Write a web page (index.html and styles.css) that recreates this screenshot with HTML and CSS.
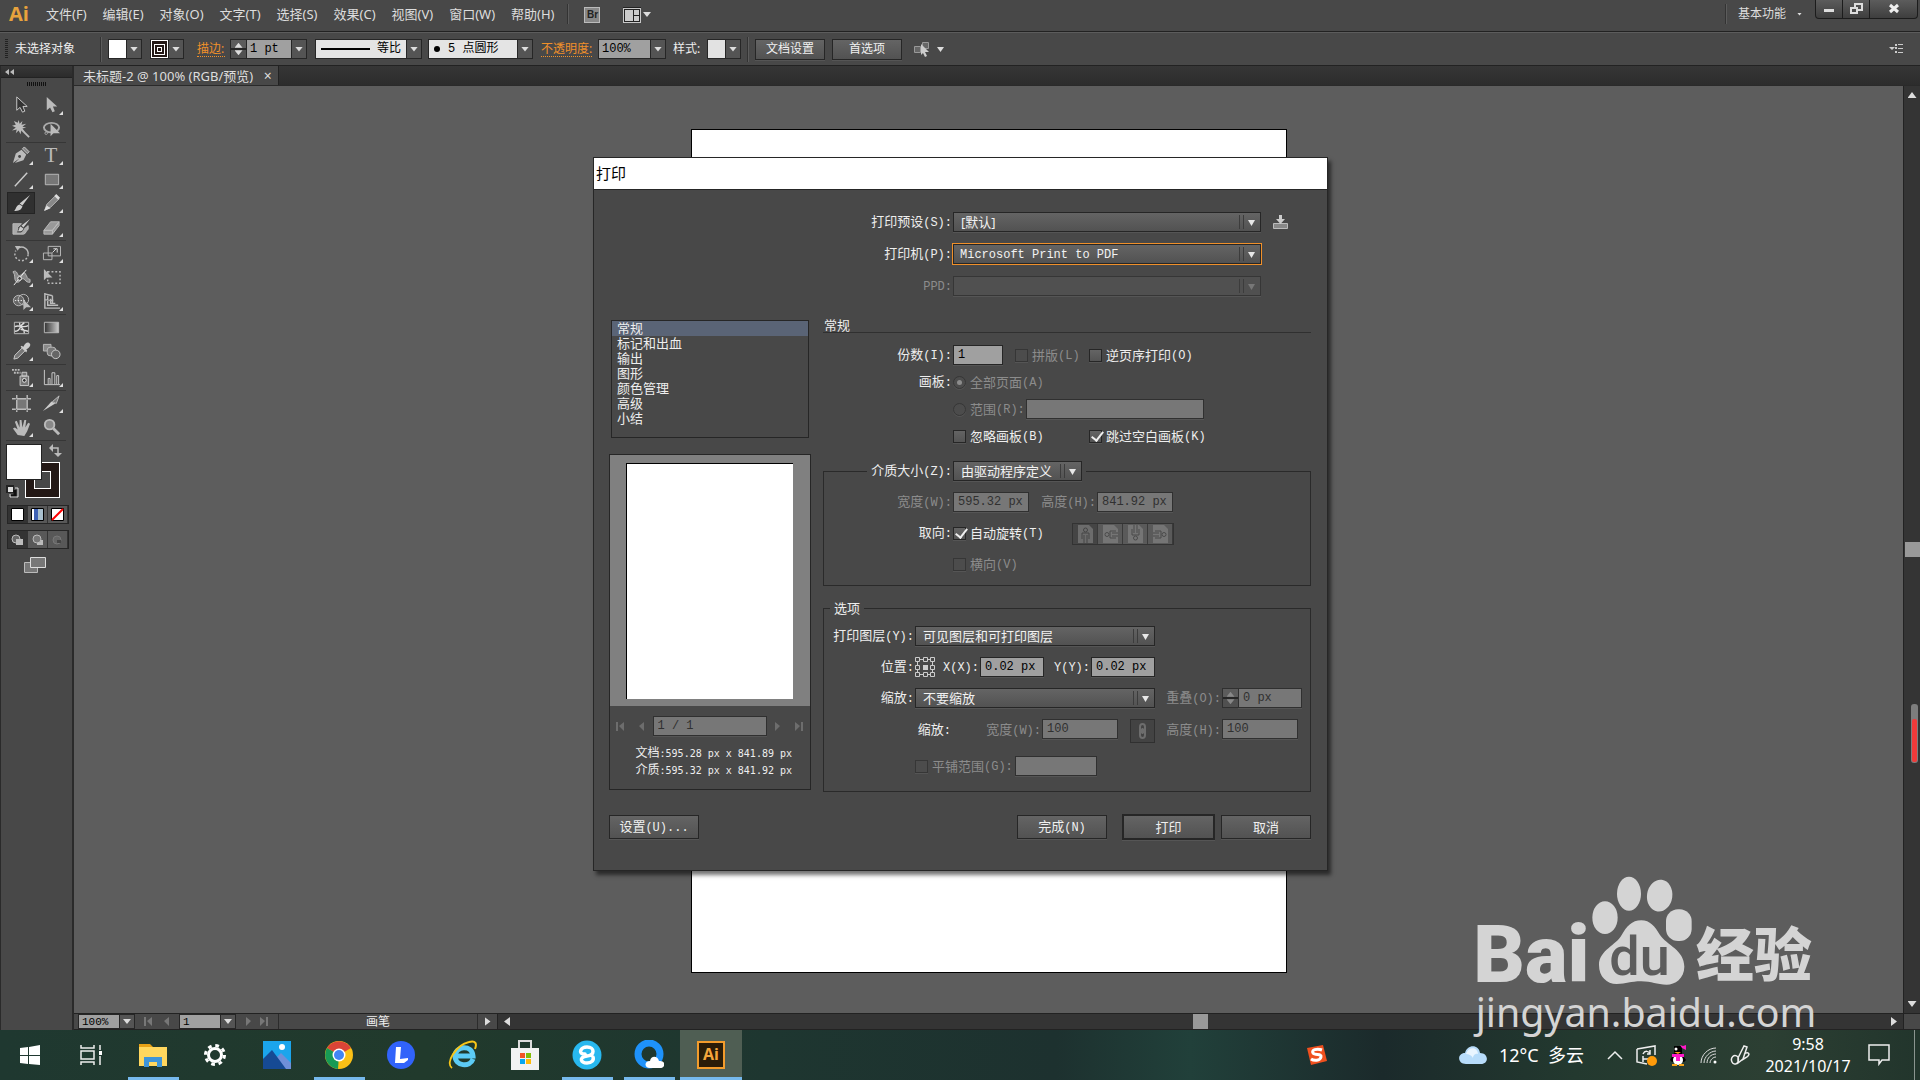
FILE: index.html
```html
<!DOCTYPE html>
<html lang="zh-CN">
<head>
<meta charset="utf-8">
<title>未标题-2 - 打印</title>
<link rel="stylesheet" href="styles.css">
</head>
<body>
<header class="menubar">
  <span class="app-logo">Ai</span>
  <nav class="menus">
    <button>文件(F)</button><button>编辑(E)</button><button>对象(O)</button><button>文字(T)</button><button>选择(S)</button><button>效果(C)</button><button>视图(V)</button><button>窗口(W)</button><button>帮助(H)</button>
  </nav>
  <span class="divider menu-divider"></span>
  <button class="bridge" aria-label="Bridge">Br</button>
  <button class="arrange" aria-label="排列文档">
    <svg width="28" height="16" viewBox="0 0 28 16"><path fill="#222" d="M0 0h18v16H0z"/><path fill="#c8c8c8" d="M0 1h18v15H0z"/><path fill="#222" d="M1 2h16v13H1z"/><path fill="#ccc" d="M2 3h8v11H2zM11 3h5v5h-5zM11 9h5v5h-5z"/><path fill="#ddd" d="M20 5h8l-4 5z"/></svg>
  </button>
  <span class="grow"></span>
  <span class="divider"></span>
  <button class="workspace-name">基本功能 <i class="tri tiny"></i></button>
  <div class="window-buttons">
    <button aria-label="最小化"><svg width="12" height="12"><path fill="#ddd" d="M1 6h10v3H1z"/></svg></button>
    <button aria-label="还原"><svg width="13" height="12"><path fill="none" stroke="#ddd" stroke-width="2" d="M5 5V1h7v6H8M1 5h6v5H1z"/></svg></button>
    <button class="close" aria-label="关闭"><svg width="12" height="12"><path stroke="#eee" stroke-width="3" d="M2 2l8 7M10 2L2 9"/></svg></button>
  </div>
</header>

<section class="controlbar">
  <span class="grip"></span>
  <span class="selection-state">未选择对象</span>
  <span class="divider"></span>
  <button class="combo fill" aria-label="填色"><span class="swatch white"></span><span class="drop"><i class="tri"></i></span></button>
  <button class="combo stroke" aria-label="描边颜色"><span class="swatch ring"></span><span class="drop"><i class="tri"></i></span></button>
  <a class="hot stroke-link" href="#">描边:</a>
  <div class="combo weight"><span class="stepper"><i class="tri up"></i><i class="tri"></i></span><input class="mono" aria-label="描边粗细" value="1 pt"><span class="drop"><i class="tri"></i></span></div>
  <button class="combo profile"><span class="face"><span class="rule"></span>等比</span><span class="drop"><i class="tri"></i></span></button>
  <button class="combo brush"><span class="face"><span class="dot"></span>5 点圆形</span><span class="drop"><i class="tri"></i></span></button>
  <a class="hot opacity-link" href="#">不透明度:</a>
  <div class="combo opacity"><input class="mono" aria-label="不透明度" value="100%"><span class="drop"><i class="tri"></i></span></div>
  <span class="style-label">样式:</span>
  <button class="combo style" aria-label="样式"><span class="swatch pale"></span><span class="drop"><i class="tri"></i></span></button>
  <span class="divider style-divider"></span>
  <button class="btn bar-btn">文档设置</button>
  <button class="btn bar-btn">首选项</button>
  <button class="similar" aria-label="选择类似的对象">
    <svg width="32" height="16" viewBox="0 0 32 16"><path fill="#666" stroke="#999" d="M1.500 5.500h6v6h-6zM9.500 1.500h6v6h-6z"/><path fill="#ccc" d="M8 3l8 8h-4l2 4-2 1-2-4-2 2z"/><path fill="#ddd" d="M24 6h7l-3.500 5z"/></svg>
  </button>
  <span class="grow"></span>
  <button class="panel-menu" aria-label="面板菜单"><svg width="14" height="10"><path fill="#ccc" d="M0 3h6L3 6zM6 0h2v2H6zM9 0h5v1H9zM6 3h2v2H6zM9 4h5v1H9zM6 7h2v2H6zM9 8h5v1H9z"/></svg></button>
</section>

<main class="workspace">
  <aside class="toolbox">
    <div class="toolbox-head"><svg width="9" height="6"><path fill="#bbb" d="M4 0v6L0 3zM9 0v6L5 3z"/></svg></div>
    <div class="toolbox-grip"></div>
    <div class="tools">
      <div class="group">
        <button aria-label="选择工具"><svg viewBox="0 0 20 20"><path fill="#333" stroke="#ccc" d="M5 1v14l3.500-3 2.500 5 2.500-1-2-5H16z"/></svg></button>
        <button class="more" aria-label="直接选择工具"><svg viewBox="0 0 20 20"><path fill="#bbb" d="M5 1v14l3.500-3 2.500 5 2.500-1-2-5H16z"/></svg></button>
        <button aria-label="魔棒工具"><svg viewBox="0 0 20 20"><path stroke="#bbb" stroke-width="2" d="M9 9l9 9"/><path fill="#bbb" d="M7 0l1 4 3-3-1 4 5-1-4 3 4 1-4 1 3 4-4-3-1 5-2-4-3 3 1-4-5 1 4-3-4-2 4-1-2-4 4 2z"/></svg></button>
        <button aria-label="套索工具"><svg viewBox="0 0 20 20"><ellipse cx="10" cy="8" rx="8" ry="5" fill="none" stroke="#aaa" stroke-width="2"/><path fill="none" stroke="#aaa" d="M5 12c-3 1-2 4 0 3s1-3-1-2"/><path fill="#bbb" d="M9 4v13l3-3h7z"/></svg></button>
      </div>
      <div class="group">
        <button class="more" aria-label="钢笔工具"><svg viewBox="0 0 20 20"><path fill="#bbb" d="M1 18L4 8l6-4 5 5-3 6-9 3 5-5z"/><circle cx="8" cy="11" r="1.500" fill="#444"/><path fill="#888" stroke="#ccc" d="M11 3l2-2 5 5-2 2z"/></svg></button>
        <button class="more type" aria-label="文字工具">T</button>
        <button class="more" aria-label="直线段工具"><svg viewBox="0 0 20 20"><path stroke="#ccc" stroke-width="1.500" d="M3 17L16 3"/></svg></button>
        <button class="more" aria-label="矩形工具"><svg viewBox="0 0 20 20"><path fill="#777" stroke="#bbb" d="M3.500 4.500h14v11h-14z"/></svg></button>
        <button class="active" aria-label="画笔工具"><svg viewBox="0 0 20 20"><path fill="#ccc" d="M19 1l-8 11-3-2zM8 11l3 2c-1 4-4 5-9 5 2-1 2-6 6-7z"/></svg></button>
        <button class="more" aria-label="铅笔工具"><svg viewBox="0 0 20 20"><path fill="#888" stroke="#bbb" d="M3 17l2-6 9-9 4 3-9 9z"/><path fill="#ddd" d="M2 18l3-6 4 3zM13 2l4 4 2-2-4-4z"/></svg></button>
        <button aria-label="斑点画笔工具"><svg viewBox="0 0 20 20"><path fill="#aaa" stroke="#bbb" d="M1 6h9l-4 4c1 5 8 1 11-2v4c-2 0-2 5-5 5H1z"/><path fill="#444" d="M20 2l-8 10-4-2 8-8zM8 9l5 2c-2 4-4 5-8 4 2-1 1-5 3-6z"/><path fill="#ccc" d="M19 1l-7 9-2-2zM9 9l3 2c-1 3-3 3-6 3 2-1 1-4 3-5z"/></svg></button>
        <button class="more" aria-label="橡皮擦工具"><svg viewBox="0 0 20 20"><path fill="#999" stroke="#bbb" d="M2 13l7-9h9l-7 9zM2 13h9v4H2zM11 13l7-9v4l-7 9z"/></svg></button>
      </div>
      <div class="group">
        <button class="more" aria-label="旋转工具"><svg viewBox="0 0 20 20"><path fill="none" stroke="#bbb" stroke-width="1.500" d="M7 4a7 7 0 0 1 10 7"/><path fill="none" stroke="#bbb" stroke-width="1.500" stroke-dasharray="2" d="M17 11a7 7 0 1 1-13-4"/><path fill="#bbb" d="M3 2l6 0-3 5z"/></svg></button>
        <button class="more" aria-label="比例缩放工具"><svg viewBox="0 0 20 20"><path fill="none" stroke="#bbb" d="M6.500 2.500h13v10h-13zM1.500 9.500h9v7h-9z"/><path stroke="#ddd" fill="none" d="M11 9l4-4M12 5h4v4"/></svg></button>
        <button class="more" aria-label="宽度工具"><svg viewBox="0 0 20 20"><path fill="#888" stroke="#bbb" d="M1 4c5-3 4 5 7 4s4-5 6-2 2 6 5 6v3c-5 1-6-6-9-3s-4 4-6 2 0-7-3-10z"/><path stroke="#eee" d="M2 18L15 2"/><circle cx="8" cy="11" r="2" fill="#444" stroke="#eee"/></svg></button>
        <button aria-label="自由变换工具"><svg viewBox="0 0 20 20"><path fill="none" stroke="#bbb" stroke-width="1.500" stroke-dasharray="2" d="M6 4h13v12H6z"/><path fill="#bbb" d="M2 1v12l3-3h6z"/></svg></button>
        <button class="more" aria-label="形状生成器工具"><svg viewBox="0 0 20 20"><circle cx="7" cy="9" r="5.500" fill="#666" stroke="#bbb"/><circle cx="12" cy="8" r="5.500" fill="none" stroke="#bbb"/><path stroke="#eee" stroke-dasharray="1.500" d="M3 9h12"/><path fill="#bbb" d="M12 8v11l3-3h5z"/></svg></button>
        <button class="more" aria-label="透视网格工具"><svg viewBox="0 0 20 20"><path fill="none" stroke="#bbb" stroke-width="1.500" d="M3 1v16h16M6 4v10h11M9 7v5h5M3 2l8 2M11 4v8M3 17V2M3 8l9 1"/></svg></button>
      </div>
      <div class="group">
        <button aria-label="网格工具"><svg viewBox="0 0 20 20"><path fill="#444" stroke="#bbb" d="M2.500 4.500h15v12h-15z"/><path fill="none" stroke="#ddd" stroke-width="1.500" d="M3 14c7 0 4-6 10-9M8 5c-1 5 5 5 5 11M3 9c5-2 9 2 14-1M9 12l8 2"/></svg></button>
        <button aria-label="渐变工具"><svg viewBox="0 0 20 20"><defs><linearGradient id="toolGradient"><stop stop-color="#333"/><stop offset="1" stop-color="#ccc"/></linearGradient></defs><path fill="url(#toolGradient)" stroke="#bbb" d="M2.500 4.500h15v11h-15z"/></svg></button>
        <button class="more" aria-label="吸管工具"><svg viewBox="0 0 20 20"><path fill="#777" stroke="#ccc" d="M2 18l1-4 8-8 3 3-8 8z"/><path fill="#ccc" d="M9 5l6 6 1-2-1-1c5-3 5-6 3-7s-4 0-6 4l-2-1z"/></svg></button>
        <button aria-label="混合工具"><svg viewBox="0 0 20 20"><path fill="#888" stroke="#bbb" d="M1.500 2.500h8v7h-8z"/><rect x="5.500" y="5.500" width="9" height="9" rx="3" fill="#777" stroke="#bbb"/><circle cx="14.500" cy="13" r="4.500" fill="#666" stroke="#ccc"/></svg></button>
      </div>
      <div class="group">
        <button class="more" aria-label="符号喷枪工具"><svg viewBox="0 0 20 20"><path fill="#777" stroke="#ccc" d="M8.500 8.500h9v10h-9zM10.500 4.500h5v4h-5z"/><circle cx="13" cy="13" r="2" fill="#333" stroke="#eee"/><path stroke="#bbb" stroke-width="2" stroke-dasharray="2 1" d="M0 2h9M2 5h7"/></svg></button>
        <button class="more" aria-label="柱形图工具"><svg viewBox="0 0 20 20"><path fill="none" stroke="#ccc" d="M2.500 2v15.500H19M6.500 17v-6h2v6M10.500 17V5h3v12M15.500 17V8h2v9"/></svg></button>
      </div>
      <div class="group">
        <button aria-label="画板工具"><svg viewBox="0 0 20 20"><path fill="#777" d="M5 5h11v11H5z"/><path stroke="#bbb" stroke-width="1.500" d="M5 1v18M16 1v18M0 5h20M0 16h20" stroke-dasharray="4 1 10 1"/></svg></button>
        <button class="more" aria-label="切片工具"><svg viewBox="0 0 20 20"><path fill="#ccc" d="M1 18l9-10 4 2z"/><path fill="#777" stroke="#bbb" d="M11 8l7-6-3 8z"/></svg></button>
        <button class="more" aria-label="抓手工具"><svg viewBox="0 0 20 20"><path fill="#bbb" d="M6 18L1 11l2-1 3 2L3 4l2-1 3 7V2h2l1 8 2-8h2l-1 8 3-5 2 1-3 8-3 5z"/></svg></button>
        <button aria-label="缩放工具"><svg viewBox="0 0 20 20"><circle cx="8" cy="7" r="5" fill="#888" stroke="#bbb" stroke-width="2"/><path stroke="#bbb" stroke-width="3" d="M12 11l6 6"/></svg></button>
      </div>
    </div>
    <svg class="fill-stroke" width="62" height="58" viewBox="0 0 62 58">
      <path fill="#fff" d="M19 18h35v36H19z"/><path fill="#231815" d="M20 19h33v34H20z"/><path fill="#fff" d="M28 27h17v18H28z"/><path fill="#484848" d="M29 28h15v16H29z"/>
      <path fill="#222" d="M0 0h36v36H0z"/><path fill="#fff" d="M1 1h34v34H1z"/>
      <path fill="none" stroke="#bbb" stroke-width="1.500" d="M46 4h6v6"/><path fill="#bbb" d="M47 0v8l-4-4zM48 9h8l-4 4z"/>
      <path fill="#222" d="M0 41h8v8H0z"/><path fill="#ddd" d="M2 43h5v5H2z"/><path fill="none" stroke="#111" stroke-width="3" d="M9 46v6H5"/><path fill="none" stroke="#ddd" d="M9 44h3v9H4v-3"/>
    </svg>
    <div class="modes color-modes">
      <button class="active" aria-label="颜色"><svg width="13" height="13"><path fill="#fff" stroke="#000" d="M.5.500h12v12H.5z"/></svg></button>
      <button aria-label="渐变"><svg width="13" height="13"><path fill="#fff" stroke="#000" d="M.5.500h12v12H.5z"/><path fill="#3f62b5" d="M3 1h4v11H3z"/><path fill="#a9c0ce" d="M7 1h5v11H7z"/></svg></button>
      <button aria-label="无"><svg width="13" height="13"><path fill="#fff" stroke="#000" d="M.5.500h12v12H.5z"/><path stroke="red" stroke-width="2" d="M1 12L12 1"/></svg></button>
    </div>
    <div class="modes">
      <button class="active" aria-label="正常绘图"><svg width="13" height="12"><circle cx="5" cy="5" r="4" fill="#666" stroke="#bbb"/><path fill="#bbb" d="M5 5h7v6H5z"/></svg></button>
      <button aria-label="背面绘图"><svg width="13" height="12"><path fill="#bbb" d="M6 6h6v5H6z"/><circle cx="6" cy="5" r="4" fill="#777" stroke="#bbb"/></svg></button>
      <button aria-label="内部绘图"><svg width="13" height="12"><circle cx="6" cy="6" r="4" fill="#666" stroke="#777"/><path fill="#444" d="M6 6h4v3H6z"/></svg></button>
    </div>
    <button class="screen-mode" aria-label="更改屏幕模式"><svg width="22" height="17"><path fill="#777" stroke="#bbb" d="M.5 5.500h13v10H.5z"/><path fill="#777" stroke="#ddd" d="M6.500.500h15v10h-15z"/></svg></button>
  </aside>

  <section class="document">
    <div class="tabs"><div class="tab">未标题-2 @ 100% (RGB/预览)<button class="tab-close" aria-label="关闭标签">×</button></div></div>
    <div class="viewport">
      <div class="canvas"><div class="artboard"></div></div>
      <div class="vscroll"><i class="arrow up"></i><i class="thumb"></i><i class="arrow"></i></div>
    </div>
    <footer class="status">
      <div class="combo zoom"><input class="mono" aria-label="缩放比例" value="100%"><span class="drop"><i class="tri"></i></span></div>
      <svg class="nav-icons" width="26" height="9"><path fill="#777" d="M0 0h2v9H0zM8 0v9L3 4zM25 0v9l-5-5z"/></svg>
      <div class="combo page"><input class="mono" aria-label="画板" value="1"><span class="drop"><i class="tri"></i></span></div>
      <svg class="nav-icons" width="24" height="9"><path fill="#777" d="M1 0v9l5-5zM15 0v9l5-5zM21 0h2v9h-2z"/></svg>
      <div class="current-tool">画笔</div>
      <button class="status-more" aria-label="状态菜单"><i class="side to-right"></i></button>
      <div class="hscroll"><i class="side"></i><i class="thumb"></i><i class="side to-right"></i></div>
      <span class="corner"></span>
    </footer>
  </section>
</main>

<footer class="taskbar">
  <button aria-label="开始"><svg width="22" height="22" viewBox="0 0 22 22"><path fill="#fff" d="M1 4l8-1v8H1zM10 3l11-2v10H10zM1 12h8v8l-8-1zM10 12h11v9l-11-1z"/></svg></button>
  <button aria-label="任务视图"><svg width="22" height="22" viewBox="0 0 22 22"><path fill="none" stroke="#eee" stroke-width="1.500" d="M1 1v3h13V1M1 7h13v8H1zM1 21v-3h13v3M20 1v5M20 12v9"/><path fill="#fff" d="M19 7h3v4h-3z"/></svg></button>
  <button class="open" aria-label="文件资源管理器"><svg width="28" height="26" viewBox="0 0 28 26"><path fill="#e6a117" d="M0 2h11l3 3v4H0z"/><path fill="#ffd75e" d="M0 5h28v19H0z"/><path fill="#3f95d8" d="M5 15h18v10h-5v-5h-8v5H5z"/></svg></button>
  <button aria-label="设置"><svg width="24" height="24" viewBox="0 0 24 24"><circle cx="12" cy="12" r="6.500" fill="none" stroke="#fff" stroke-width="3"/><circle cx="12" cy="12" r="9.500" fill="none" stroke="#fff" stroke-width="3" stroke-dasharray="3.730 3.730"/></svg></button>
  <button aria-label="照片"><svg width="28" height="28" viewBox="0 0 28 28"><path fill="#1ba5ec" d="M0 0h28v28H0z"/><path fill="#6f8fd8" d="M13 17l5-5 10 10v6H13z"/><path fill="#164a94" d="M0 18l9-9 14 19H0z"/><circle cx="19" cy="6" r="3" fill="#fff"/></svg></button>
  <button class="open" aria-label="Chrome"><svg width="28" height="28" viewBox="0 0 28 28"><circle cx="14" cy="14" r="14" fill="#fbc116"/><path fill="#db4437" d="M14 14L2 7a14 14 0 0 1 24 0z"/><path fill="#189a55" d="M14 14l-1 14A14 14 0 0 1 2 7z"/><circle cx="14" cy="14" r="6.500" fill="#fff"/><circle cx="14" cy="14" r="5" fill="#4285f4"/></svg></button>
  <button aria-label="L"><svg width="29" height="29" viewBox="0 0 29 29"><circle cx="14" cy="14" r="14" fill="#3163fa"/><path fill="#fff" d="M9 6h5l-1 12 8-1v2l-4 3H8z"/></svg></button>
  <button aria-label="Internet Explorer"><svg width="30" height="30" viewBox="0 0 30 30"><path fill="none" stroke="#5ccbf5" stroke-width="5" d="M25 19c-3 9-18 7-18-3s17-12 18 0H8"/><path fill="none" stroke="#f7c518" stroke-width="2" d="M4 28C-3 23 8 5 21 2c7-2 8 2 6 7"/></svg></button>
  <button aria-label="Microsoft Store"><svg width="30" height="30" viewBox="0 0 30 30"><path fill="none" stroke="#ddd" stroke-width="2" d="M9 10V1h12v9"/><path fill="#f2f2f2" d="M1 8h28v22H1z"/><path fill="#f35325" d="M10 13h5v5h-5z"/><path fill="#81bc06" d="M16 13h5v5h-5z"/><path fill="#05a6f0" d="M10 19h5v5h-5z"/><path fill="#ffba08" d="M16 19h5v5h-5z"/></svg></button>
  <button class="open" aria-label="浏览器"><svg width="30" height="30" viewBox="0 0 30 30"><circle cx="15" cy="15" r="14.500" fill="#28b8ef"/><path fill="none" stroke="#fff" stroke-width="3.500" stroke-linecap="round" d="M13 14C5 14 9 7 15 7c8 0 8 8 0 9-9 1-6 7 0 7 5 0 7-3 6-6"/></svg></button>
  <button class="open" aria-label="QQ浏览器"><svg width="30" height="30" viewBox="0 0 30 30"><circle cx="15" cy="14" r="11" fill="none" stroke="#1e92fa" stroke-width="7"/><path fill="#fff" d="M16 28c-6 0-6-7 0-7 1-6 8-5 9 0 7-1 7 7 1 7z"/></svg></button>
  <button class="open current" aria-label="Illustrator"><span class="ai-tile">Ai</span></button>
  <span class="grow"></span>
  <svg class="sogou" width="20" height="20" viewBox="0 0 20 20"><path fill="#f0501e" d="M0 3l16-3 4 16-16 4z"/><path fill="none" stroke="#fff" stroke-width="3" d="M15 5C10 3 4 5 6 8s9 0 8 4-7 4-10 2"/></svg>
  <div class="weather"><svg width="28" height="18" viewBox="0 0 28 18"><path fill="#b7dcfa" d="M7 18c-9 0-9-11-1-11 2-9 14-9 15 0 9 0 9 11 1 11z"/><path fill="#e9f5ff" d="M7 8c2-7 11-8 12 0-3-1-5 2-5 4-2-3-4-4-7-4z"/></svg><span>12°C&nbsp; 多云</span></div>
  <div class="tray">
    <svg width="16" height="10"><path fill="none" stroke="#eee" stroke-width="1.500" d="M1 9l7-7 7 7"/></svg>
    <svg width="21" height="21" viewBox="0 0 21 21"><path fill="none" stroke="#eee" stroke-width="1.500" d="M1 4l18-3v9M1 4v13l10 2M7 9c2-4 6-3 7 0M14 5v4h-3M7 14h5M7 11v6"/><circle cx="16" cy="16" r="5" fill="#ff9b0a"/></svg>
    <svg width="17" height="21" viewBox="0 0 17 21"><path fill="#000" d="M4 1h8v8l4 6-2 2H2l-2-2 4-7z"/><ellipse cx="8" cy="15" rx="5" ry="5" fill="#fff"/><path fill="#ff19c8" d="M2 9h12v3H2zM6 10h4v6H6zM10 0l3 1 3-1v5l-4-2z"/><circle cx="6" cy="4" r="1.500" fill="#fff"/><path fill="#f7a319" d="M4 7h7l-3 2zM2 19h5v2H2zM9 19h5v2H9z"/></svg>
    <svg width="17" height="17" viewBox="0 0 17 17"><path fill="none" stroke="#ddd" d="M1 16C1 8 8 1 16 1M4 16c0-6 6-12 12-12M7 16c0-5 4-9 9-9M10 16c0-3 3-6 6-6"/><circle cx="15" cy="15" r="1.500" fill="#fff"/></svg>
    <svg width="20" height="20" viewBox="0 0 20 20"><path fill="none" stroke="#eee" stroke-width="1.500" d="M8 13L14 1l3 1-4 12-5 4zM8 12c-4-4-8 1-6 5s8 2 6-5M14 9c4-3 7 0 3 3l-5 3"/></svg>
  </div>
  <div class="clock"><span>9:58</span><span>2021/10/17</span></div>
  <svg class="notice" width="22" height="22"><path fill="none" stroke="#eee" stroke-width="1.500" d="M1 1h20v15h-7l-3 4v-4H1z"/></svg>
  <span class="show-desktop"></span>
</footer>

<svg class="watermark" viewBox="99 69 1041 501" width="347" height="167">
  <g fill="#d4d4d4">
    <text class="wm-latin" x="100" y="397">Bai</text>
    <ellipse cx="495" cy="203" rx="38" ry="49"/><ellipse cx="567" cy="131" rx="36" ry="51"/><ellipse cx="659" cy="137" rx="38" ry="48" transform="rotate(8 659 137)"/><rect x="678" y="178" width="77" height="95" rx="36"/>
    <path d="M604 211c26 0 41 19 56 44 20 30 73 45 73 95 0 35-28 54-53 54-30 0-45-10-76-10-34 0-44 8-74 8-30 0-53-22-53-57 0-45 53-60 68-90 15-25 30-44 59-44z"/>
    <text class="wm-cjk" x="768" y="379">经验</text>
    <text class="wm-url" x="107" y="531">jingyan.baidu.com</text>
  </g>
  <text class="wm-du" x="508" y="375">du</text>
</svg>

<svg class="side-marker" width="7" height="59"><rect width="7" height="59" rx="3" fill="#7d7d7d"/><rect x="1" y="15" width="5" height="43" rx="2" fill="#f03a3a"/></svg>

<section class="dialog" role="dialog" aria-labelledby="dialogTitle">
  <h1 id="dialogTitle">打印</h1>
  <form class="dialog-body">
    <div class="header-rows">
      <div class="row"><label class="lab" for="preset">打印预设<span class="key">(S):</span></label><span class="select"><select id="preset"><option>[默认]</option></select></span>
        <button type="button" class="save" aria-label="存储预设"><svg width="15" height="14"><path fill="#888" stroke="#bbb" d="M.5 8.500h14v5H.5z"/><path fill="#ccc" d="M6 0h3v4h3l-4.500 5L3 4h3z"/></svg></button></div>
      <div class="row"><label class="lab" for="printer">打印机<span class="key">(P):</span></label><span class="select focus"><select id="printer" class="mono"><option>Microsoft Print to PDF</option></select></span></div>
      <div class="row off"><label class="lab" for="ppd"><span class="key">PPD:</span></label><span class="select"><select id="ppd" disabled><option></option></select></span></div>
    </div>

    <div class="columns">
      <div class="nav-column">
        <ul class="sections" role="listbox" aria-label="打印选项">
          <li role="option" aria-selected="true">常规</li><li role="option">标记和出血</li><li role="option">输出</li><li role="option">图形</li><li role="option">颜色管理</li><li role="option">高级</li><li role="option">小结</li>
        </ul>
        <div class="preview">
          <div class="preview-area"><div class="sheet"></div></div>
          <div class="pager">
            <svg width="29" height="9"><path fill="#6d6d6d" d="M0 0h2v9H0zM8 0v9L3 4zM28 0v9l-5-5z"/></svg>
            <input class="mono" aria-label="页码" value="1 / 1" disabled>
            <svg width="29" height="9"><path fill="#6d6d6d" d="M1 0v9l5-5zM21 0v9l5-5zM27 0h2v9h-2z"/></svg>
          </div>
          <p class="sizes">文档<span class="dims">:595.28 px x 841.89 px</span></p>
          <p class="sizes">介质<span class="dims">:595.32 px x 841.92 px</span></p>
        </div>
      </div>

      <div class="settings-column">
        <h2>常规</h2>
        <div class="general">
          <div class="row"><label class="lab" for="copies">份数<span class="key">(I):</span></label><input id="copies" class="mono w-copies" value="1">
            <label class="check collate off"><input type="checkbox" disabled>拼版<span class="key">(L)</span></label>
            <label class="check"><input type="checkbox">逆页序打印<span class="key">(O)</span></label></div>
          <div class="row"><span class="lab">画板<span class="key">:</span></span><label class="check off"><input type="radio" name="boards" checked disabled>全部页面<span class="key">(A)</span></label></div>
          <div class="row"><span class="lab"></span><label class="check range off"><input type="radio" name="boards" disabled>范围<span class="key">(R):</span></label><input class="mono w-range" aria-label="范围" disabled></div>
          <div class="row"><span class="lab"></span><label class="check ignore"><input type="checkbox">忽略画板<span class="key">(B)</span></label><label class="check"><input type="checkbox" checked>跳过空白画板<span class="key">(K)</span></label></div>
        </div>

        <fieldset class="media">
          <legend><label class="legend-label" for="media">介质大小<span class="key">(Z):</span></label><span class="select"><select id="media"><option>由驱动程序定义</option></select></span></legend>
          <div class="row off"><label class="lab" for="mw">宽度<span class="key">(W):</span></label><input id="mw" class="mono w-size" value="595.32 px" disabled><label class="lab lab-68" for="mh">高度<span class="key">(H):</span></label><input id="mh" class="mono w-size" value="841.92 px" disabled></div>
          <div class="row"><span class="lab">取向<span class="key">:</span></span><label class="check rotate"><input type="checkbox" checked>自动旋转<span class="key">(T)</span></label>
            <span class="orient">
              <button type="button" disabled aria-label="纵向" class="on"><svg width="15" height="18" viewBox="0 0 15 18"><path fill="#6c6c6c" d="M0 0h11l4 4v14H0z"/><g fill="none" stroke="#444"><circle cx="7.500" cy="5" r="2"/><path d="M4 14V8h7v6M6 18v-8M9 18v-8"/></g></svg></button>
              <button type="button" disabled aria-label="横向左"><svg width="15" height="18" viewBox="0 0 15 18"><path fill="#757575" d="M0 0h11l4 4v14H0z"/><g fill="none" stroke="#4a4a4a"><circle cx="4" cy="9.500" r="2"/><path d="M13 6H7v7h6M15 8H9M15 11H9"/></g></svg></button>
              <button type="button" disabled aria-label="纵向翻转"><svg width="15" height="18" viewBox="0 0 15 18"><path fill="#757575" d="M0 0h11l4 4v14H0z"/><g fill="none" stroke="#4a4a4a"><circle cx="7.500" cy="13" r="2"/><path d="M4 4v6h7V4M6 0v8M9 0v8"/></g></svg></button>
              <button type="button" disabled aria-label="横向右"><svg width="15" height="18" viewBox="0 0 15 18"><path fill="#757575" d="M0 0h11l4 4v14H0z"/><g fill="none" stroke="#4a4a4a"><circle cx="11" cy="9.500" r="2"/><path d="M2 6h6v7H2M0 8h6M0 11h6"/></g></svg></button>
            </span></div>
          <div class="row short"><span class="lab"></span><label class="check off"><input type="checkbox" disabled>横向<span class="key">(V)</span></label></div>
        </fieldset>

        <fieldset class="options">
          <legend>选项</legend>
          <div class="row"><label class="lab" for="layers">打印图层<span class="key">(Y):</span></label><span class="select"><select id="layers"><option>可见图层和可打印图层</option></select></span></div>
          <div class="row"><span class="lab">位置<span class="key">:</span></span>
            <svg class="anchor" width="20" height="20"><path fill="none" stroke="#ccc" d="M2.500 2.500h15v15h-15z"/><path fill="#484848" stroke="#ccc" d="M.5.500h4v4h-4zM8.500.500h4v4h-4zM15.500.500h4v4h-4zM.5 8.500h4v4h-4zM15.500 8.500h4v4h-4zM.5 15.500h4v4h-4zM8.500 15.500h4v4h-4zM15.500 15.500h4v4h-4z"/><path fill="#ccc" d="M8 8h5v5H8z"/></svg>
            <label class="lab lab-45" for="px"><span class="key">X(X):</span></label><input id="px" class="mono w-pos" value="0.02 px"><label class="lab lab-47" for="py"><span class="key">Y(Y):</span></label><input id="py" class="mono w-pos" value="0.02 px"></div>
          <div class="row"><label class="lab" for="scale">缩放<span class="key">:</span></label><span class="select"><select id="scale"><option>不要缩放</option></select></span>
            <label class="lab lab-67 off" for="overlap">重叠<span class="key">(O):</span></label><span class="stepper off"><i class="tri up"></i><i class="tri"></i></span><input id="overlap" class="mono w-pos" value="0 px" disabled></div>
          <div class="row top"><span class="lab lab-129">缩放<span class="key">:</span></span><label class="lab lab-90 off" for="sw">宽度<span class="key">(W):</span></label><input id="sw" class="mono w-size" value="100" disabled>
            <button type="button" class="link" disabled aria-label="约束比例"><svg width="9" height="16"><path fill="none" stroke="#6d6d6d" stroke-width="2" d="M2 7V4q0-3 2.500-3T7 4v3zM2 9h5v3q0 3-2.500 3T2 12zM4.500 5v6"/></svg></button>
            <label class="lab lab-67 off" for="sh">高度<span class="key">(H):</span></label><input id="sh" class="mono w-size" value="100" disabled></div>
          <div class="row last off"><span class="lab"></span><label class="check tile"><input type="checkbox" disabled>平铺范围<span class="key">(G):</span></label><input class="mono w-tile" aria-label="平铺范围" disabled></div>
        </fieldset>
      </div>
    </div>

    <div class="actions">
      <button type="button" class="btn">设置<span class="key">(U)...</span></button>
      <span class="grow"></span>
      <button type="button" class="btn">完成<span class="key">(N)</span></button>
      <button type="button" class="btn primary">打印</button>
      <button type="button" class="btn">取消</button>
    </div>
  </form>
</section>
</body>
</html>
```
FILE: styles.css
```css
* { box-sizing: border-box; }
html, body { height: 100%; }
body {
  margin: 0;
  position: relative;
  display: flex;
  flex-direction: column;
  overflow: hidden;
  background: #484848;
  color: #eee;
  font: 13px/16px "Noto Sans", "Noto Sans CJK SC", sans-serif;
}
button { margin: 0; padding: 0; border: 0; background: none; color: inherit; font: inherit; white-space: nowrap; }
input { margin: 0; border-radius: 0; font: inherit; }
svg { display: block; flex: none; }
.grow { flex: 1; }
.mono, .key { font-family: "Liberation Mono", "Noto Sans CJK SC", monospace; font-size: 12px; }

/* shared pieces */
.divider { width: 2px; height: 20px; background: #333; border-right: 1px solid #5c5c5c; }
.tri { display: block; width: 8px; height: 5px; background: #ddd; clip-path: polygon(0 0, 100% 0, 50% 100%); }
.tri.up { clip-path: polygon(50% 0, 100% 100%, 0 100%); }
.tri.tiny { width: 5px; height: 3px; margin-left: 11px; }
.side { width: 6px; height: 9px; background: #ddd; clip-path: polygon(100% 0, 100% 100%, 0 50%); }
.side.to-right { clip-path: polygon(0 0, 100% 50%, 0 100%); }
.combo { display: flex; height: 20px; border: 1px solid #262626; background: #a0a0a0; color: #000; }
.combo input { flex: 1; min-width: 0; padding: 0 3px; border: 0; background: none; color: #000; }
.drop { flex: none; width: 15px; display: flex; align-items: center; justify-content: center; border-left: 1px solid #262626; background: #545454; }
.stepper { flex: none; width: 16px; display: flex; flex-direction: column; align-items: center; justify-content: space-evenly; border-right: 1px solid #262626; background: linear-gradient(#5c5c5c 47%, #262626 47%, #262626 53%, #505050 53%); }
.btn { height: 24px; border: 1px solid #262626; background: linear-gradient(#646464, #525252); color: #f0f0f0; box-shadow: 0 1px 0 #555; }

/* menu bar */
.menubar { flex: none; height: 32px; display: flex; align-items: center; padding: 0 2px 3px 9px; border-bottom: 1px solid #222; color: #ddd; }
.app-logo { width: 37px; color: #e8a33d; font: 700 20px/24px "Open Sans", sans-serif; }
.menus { display: flex; gap: 16px; }
.menu-divider { margin: 0 15px 0 13px; }
.bridge { width: 16px; height: 16px; margin: 2px 23px 0 0; background: #888; border: 1px solid #bbb; color: #222; font: 700 10px/12px "Liberation Sans", sans-serif; }
.arrange { margin-top: 2px; }
.workspace-name { display: flex; align-items: center; margin: 0 13px 0 11px; font-size: 12px; }
.window-buttons { align-self: flex-start; display: flex; height: 19px; border: 1px solid #1c1c1c; border-top: 0; border-radius: 0 0 4px 4px; background: linear-gradient(#5c5c5c, #3e3e3e); }
.window-buttons button { width: 27px; display: grid; place-items: center; border-right: 1px solid #1c1c1c; }
.window-buttons .close { width: 47px; border: 0; }

/* control bar */
.controlbar { flex: none; height: 34px; display: flex; align-items: center; padding: 0 17px 0 5px; border-top: 1px solid #5c5c5c; border-bottom: 1px solid #222; font-size: 12px; }
.controlbar .divider { height: 25px; }
.grip { width: 3px; height: 20px; margin-right: 7px; background: repeating-linear-gradient(#222 0 1px, #484848 1px 2px); }
.selection-state { width: 85px; }
.swatch { flex: 1; background: #fff; }
.swatch.ring { display: grid; place-items: center; border: 1px solid #fff; background: #231815; }
.swatch.ring::before { content: ""; width: 9px; height: 9px; border: 1px solid #fff; background: #231815; box-shadow: inset 0 0 0 2px #231815, inset 0 0 0 3px #fff; }
.swatch.pale { background: #e2e2e2; }
.fill, .stroke { width: 34px; margin-left: 6px; }
.stroke { margin-left: 8px; }
.hot { color: #f0902a; text-decoration: none; border-bottom: 1px dotted #f0902a; line-height: 14px; white-space: nowrap; }
.stroke-link { width: 28px; margin-left: 13px; }
.weight { width: 77px; margin-left: 5px; }
.profile { width: 107px; margin-left: 8px; }
.brush { width: 105px; margin-left: 6px; }
.face { flex: 1; display: flex; align-items: center; justify-content: space-between; padding: 0 5px; background: #e4e4e4; color: #000; font-family: "Liberation Mono", "Noto Sans CJK SC", monospace; }
.rule { width: 49px; height: 2px; background: #000; }
.dot { width: 6px; height: 6px; margin-right: 2px; border-radius: 50%; background: #000; }
.brush .face { justify-content: flex-start; gap: 6px; }
.opacity-link { width: 51px; margin-left: 8px; }
.opacity { width: 68px; margin-left: 6px; }
.style-label { width: 34px; margin-left: 7px; }
.style { width: 34px; }
.style-divider { margin: 0 6px; }
.bar-btn { width: 70px; height: 21px; margin-right: 7px; }
.similar { margin-left: 4px; }

/* workspace */
.workspace { flex: 1; min-height: 0; display: flex; }
.toolbox { flex: none; width: 74px; padding-bottom: 20px; border-left: 1px solid #2a2a2a; border-right: 2px solid #2a2a2a; background: #484848; }
.toolbox-head { height: 12px; padding: 3px 0 0 4px; background: linear-gradient(#383838, #2b2b2b); border-bottom: 1px solid #222; }
.toolbox-grip { width: 20px; height: 4px; margin: 4px auto 7px; background: repeating-linear-gradient(90deg, #111 0 1px, #484848 1px 2px); }
.tools { padding: 0 6px 0 5px; }
.group { display: grid; grid-template-columns: 30px 30px; grid-auto-rows: 24px; padding-bottom: 1px; border-bottom: 1px solid #363636; }
.group button { position: relative; display: grid; place-items: center; }
.group svg { width: 19px; height: 19px; }
.group .active { margin: 1px; background: #303030; border: 1px solid #242424; }
.more::after { content: ""; position: absolute; right: 3px; bottom: 2px; width: 4px; height: 4px; background: #ddd; clip-path: polygon(100% 0, 100% 100%, 0 100%); }
.type { color: #bbb; font: 21px/22px "Liberation Serif", serif; }
.fill-stroke { margin: 3px 0 3px 5px; }
.modes { display: flex; width: 62px; height: 19px; margin: 0 0 6px 6px; border: 1px solid #262626; background: #585858; }
.modes button { flex: 1; display: grid; place-items: center; border-right: 1px solid #333; }
.modes .active { background: #333; }
.screen-mode { margin: 2px 0 0 23px; }

.document { flex: 1; min-width: 0; display: flex; flex-direction: column; }
.tabs { flex: none; height: 20px; background: linear-gradient(#363636, #2c2c2c); border-bottom: 1px solid #2a2a2a; display: flex; }
.tab { display: flex; align-items: center; gap: 10px; padding: 0 6px 0 9px; border-right: 1px solid #222; background: #484848; color: #ddd; white-space: nowrap; }
.tab-close { font-size: 14px; width: 9px; }
.viewport { flex: 1; min-height: 0; display: flex; }
.canvas { flex: 1; position: relative; overflow: hidden; background: #5d5d5d; }
.artboard { position: absolute; left: 617px; top: 43px; width: 596px; height: 844px; border: 1px solid #000; background: #fff; }
.vscroll { flex: none; width: 17px; display: flex; flex-direction: column; justify-content: space-between; align-items: center; padding: 6px 0 6px; border-left: 1px solid #222; background: #343434; }
.arrow { width: 9px; height: 6px; background: #ddd; clip-path: polygon(0 0, 100% 0, 50% 100%); }
.arrow.up { clip-path: polygon(50% 0, 100% 100%, 0 100%); }
.vscroll .thumb { width: 15px; height: 15px; background: #999; }
.status { flex: none; height: 17px; display: flex; align-items: center; padding-left: 4px; border-top: 1px solid #222; border-bottom: 1px solid #222; font-size: 12px; }
.status .combo { height: 15px; }
.zoom, .page { width: 57px; }
.status input { font-size: 11px; }
.nav-icons { margin: 0 9px; }
.current-tool { width: 200px; height: 15px; border: solid #2c2c2c; border-width: 0 1px; text-align: center; line-height: 15px; }
.status-more { width: 19px; display: grid; place-items: center; }
.hscroll { flex: 1; height: 15px; display: flex; align-items: center; justify-content: space-between; padding: 0 6px; border-left: 1px solid #222; background: #343434; }
.hscroll .thumb { width: 15px; height: 15px; background: #999; }
.corner { width: 17px; height: 15px; border-left: 1px solid #222; }

/* taskbar */
.taskbar { flex: none; height: 50px; display: flex; align-items: center; background: linear-gradient(90deg, #1f3830, #213a2c 22%, #1e3630 40%, #1d312f 55%, #21403a 62%, #1b2a2b 72%, #23392f 82%, #2c3f33 92%, #22352c); color: #fff; }
.taskbar button { flex: none; width: 62px; height: 50px; display: grid; place-items: center; }
.taskbar button:first-child { width: 60px; }
.open { background: linear-gradient(#76b9ed, #76b9ed) center bottom / 51px 3px no-repeat; }
.taskbar .current { background: linear-gradient(#76b9ed, #76b9ed) center bottom / 62px 3px no-repeat, #4f5e53; }
.ai-tile { width: 28px; height: 28px; border: 2px solid #f39c2c; background: #2a1c08; color: #f5a63c; font: 700 16px/23px "Open Sans", sans-serif; text-align: center; }
.sogou { margin-right: 132px; }
.weather { display: flex; align-items: center; gap: 12px; width: 148px; font-size: 18px; line-height: 24px; white-space: nowrap; }
.tray { display: flex; align-items: center; gap: 13px; }
.clock { width: 92px; margin: 0 14px 0 12px; display: flex; flex-direction: column; text-align: center; font-size: 16px; line-height: 22px; }
.notice { margin-right: 24px; }
.show-desktop { width: 6px; height: 50px; border-left: 1px solid #8a948f; }

.watermark { position: absolute; right: 100px; bottom: 40px; }
.wm-latin { font: 900 240px Roboto, sans-serif; }
.wm-cjk { font: 900 174px "Noto Sans CJK SC", sans-serif; }
.wm-url { font: 118px "Noto Sans", sans-serif; }
.wm-du { font: 500 162px Roboto, sans-serif; fill: #5d5d5d; }
.side-marker { position: absolute; right: 2px; top: 704px; }

/* print dialog */
.dialog { position: absolute; left: 593px; top: 157px; width: 735px; border: 1px solid #262626; background: #484848; box-shadow: 3px 4px 4px rgba(0, 0, 0, .55); }
.dialog h1 { margin: 0; height: 32px; padding: 0 2px; background: #fff; border-bottom: 1px solid #262626; color: #000; font-size: 15px; font-weight: 400; line-height: 31px; }
.dialog-body { padding: 22px 16px 30px 15px; }
.row { display: flex; align-items: center; height: 20px; white-space: nowrap; }
.lab { flex: none; width: 131px; padding-right: 1px; text-align: right; }
.off { color: #8c8c8c; }
.dialog input:not([type="checkbox"]):not([type="radio"]) { flex: none; height: 20px; padding: 0 4px; border: 1px solid #262626; background: #a0a0a0; color: #000; box-shadow: 0 1px 0 #555; }
.dialog input:not([type="checkbox"]):not([type="radio"]):disabled { background: #777; color: #303030; border-color: #303030; }
.select { position: relative; display: flex; height: 20px; border: 1px solid #262626; background: linear-gradient(#646464, #525252); box-shadow: 0 1px 0 #555; }
.select::before { content: ""; position: absolute; right: 16px; top: 2px; bottom: 2px; width: 3px; border: solid #3c3c3c; border-width: 0 1px; pointer-events: none; }
.select::after { content: ""; position: absolute; right: 5px; top: 7px; width: 7px; height: 6px; background: #e8e8e8; clip-path: polygon(0 0, 100% 0, 50% 100%); pointer-events: none; }
.select select { appearance: none; flex: 1; width: 100%; padding: 0 20px 1px 7px; border: 0; border-radius: 0; outline: 0; background: none; color: #f2f2f2; font-family: "Noto Sans", "Noto Sans CJK SC", sans-serif; font-size: 13px; line-height: 16px; }
.select select.mono { padding: 1px 20px 0 6px; font-family: "Liberation Mono", monospace; font-size: 12px; }
.focus { outline: 1px solid #f0902a; }
.off .select { background: #505050; border-color: #363636; }
.off .select::after { background: #777; }
.check { flex: none; display: flex; align-items: center; }
.check .key { padding-top: 2px; }
.check input { appearance: none; flex: none; width: 13px; height: 13px; margin-right: 4px; border: 1px solid #262626; background: linear-gradient(#646464, #545454); box-shadow: 0 1px 0 #555; }
.check input:disabled { background: #4c4c4c; border-color: #363636; }
.check input[type="radio"] { border-radius: 50%; display: grid; place-items: center; }
.check input[type="radio"]:checked::after { content: ""; width: 5px; height: 5px; border-radius: 50%; background: #8c8c8c; }
.check input[type="checkbox"]:checked::after { content: ""; display: block; width: 5px; height: 10px; margin: -2px 0 0 4px; border: solid #eee; border-width: 0 2px 2px 0; transform: rotate(38deg); }

.header-rows { display: flex; flex-direction: column; gap: 12px; padding-left: 213px; }
.header-rows .select { width: 308px; }
.save { margin-left: 12px; }
.columns { display: flex; gap: 12px; margin-top: 24px; }
.nav-column { flex: none; width: 202px; }
.sections { height: 118px; margin: 0 2px 16px; padding: 0; border: 1px solid #262626; list-style: none; line-height: 15px; }
.sections li { padding-left: 5px; }
.sections [aria-selected="true"] { background: #5a6476; }
.preview { height: 336px; border: 1px solid #262626; }
.preview-area { height: 251px; padding: 8px 17px 0 16px; background: #808080; }
.sheet { height: 236px; border: solid #000; border-width: 1px 0 0 1px; background: #fff; }
.pager { display: flex; align-items: center; justify-content: space-between; margin: 10px 7px 8px 6px; }
.pager input { width: 114px; }
.sizes { margin: 0; padding-right: 18px; text-align: right; font-size: 12px; line-height: 17px; }
.dims { font: 10px "DejaVu Sans Mono", monospace; }
.settings-column { flex: 1; min-width: 0; }
.settings-column h2 { margin: 0 0 12px; padding-left: 1px; height: 13px; border-bottom: 1px solid #303030; font-size: 13px; font-weight: 400; line-height: 10px; }
.general { display: flex; flex-direction: column; gap: 7px; }
.general .lab { width: 130px; }
.w-copies { width: 50px; }
.w-range { width: 178px; }
.w-size { width: 76px; }
.w-pos { width: 64px; }
.w-tile { width: 82px; }
.collate { width: 74px; margin-left: 12px; }
.range { width: 73px; }
.ignore { width: 136px; }
fieldset { min-width: 0; margin: 15px 0 0; padding: 0; border: 1px solid #2a2a2a; }
.media legend { display: flex; align-items: center; margin-left: 43px; padding: 0 4px; }
.legend-label { padding-right: 1px; width: 82px; text-align: right; white-space: nowrap; }
.media .select { width: 129px; }
.media .row { margin-top: 11px; }
.media .lab { width: 129px; }
.media .lab-68 { width: 68px; }
.media .row.short { height: 16px; margin: 13px 0; }
.rotate { width: 119px; }
.orient { display: flex; height: 22px; margin-top: 2px; border: 1px solid #333; }
.orient button { width: 25px; display: grid; place-items: center; border-right: 1px solid #3a3a3a; background: #5a5a5a; }
.orient .on { background: #454545; }
.options { padding-bottom: 15px; }
.options legend { margin-left: 6px; padding: 0 4px; line-height: 14px; }
.options .row { margin-top: 11px; }
.options .row.last { margin-top: 13px; }
.options .lab { width: 91px; }
.options .select { width: 240px; }
.options .lab-45 { width: 45px; }
.options .lab-47 { width: 47px; }
.options .lab-67 { width: 67px; }
.options .lab-90 { width: 90px; }
.options .lab-129 { width: 128px; }
.options .stepper { height: 20px; border: 1px solid #303030; border-right: 0; }
.stepper.off .tri { background: #888; }
.row.top { height: 24px; align-items: flex-start; }
.row.top .lab { line-height: 20px; }
.link { width: 25px; height: 24px; margin-left: 12px; display: grid; place-items: center; border: 1px solid #303030; background: #434343; }
.tile { width: 100px; }
.actions { display: flex; align-items: center; margin-top: 22px; }
.actions .btn { width: 90px; }
.actions .primary { height: 26px; margin: 0 6px 0 15px; width: 93px; border-width: 2px; }
```
